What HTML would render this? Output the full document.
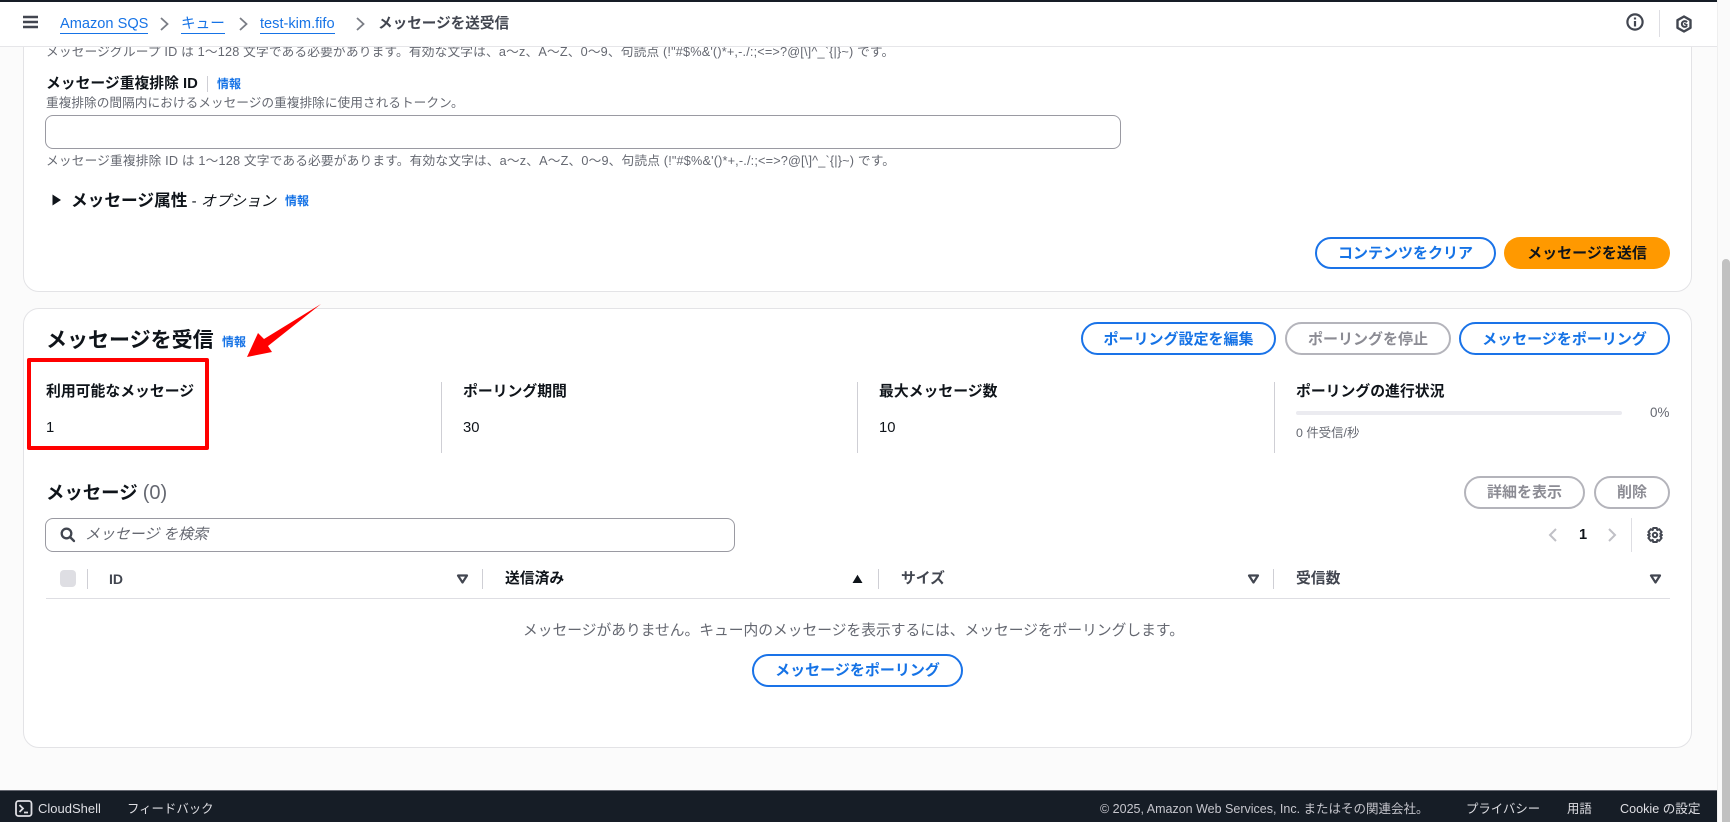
<!DOCTYPE html>
<html lang="ja"><head><meta charset="utf-8"><title>メッセージを送受信</title>
<style>
html,body{margin:0;padding:0;width:1730px;height:822px;overflow:hidden;background:#fbfbfb}
body{position:relative;font-family:"Liberation Sans","Noto Sans CJK JP",sans-serif;color:#0f141a;filter:blur(.35px)}
.a,.t,.b{position:absolute;box-sizing:border-box}
.t{white-space:nowrap;height:20px;line-height:20px;font-size:14.4px}
.h{font-weight:700}
.g{color:#656871}
.d{color:#424650}
.i{color:#1673e6;font-size:12px;font-weight:700}
.b{border:2px solid #1a73e8;border-radius:17px;color:#1673e6;font-weight:700;font-size:15px;text-align:center;white-space:nowrap;background:#fff}
.b.x{border-color:#b4b4bb;color:#8c8c94}
.b.o{border:0;background:#ff9900;color:#0f141a}
.card{background:#fff;border:1px solid #e3e3e6;border-radius:16px}
.v{background:#cfcfd5;width:1px}
.hp{font-size:12.7px;letter-spacing:.17px}
svg{position:absolute;overflow:visible}
</style></head><body>

<!-- card 1 -->
<div class="a card" style="left:23px;top:-20px;width:1669px;height:312px"></div>
<div class="t g hp" style="left:46px;top:42px">メッセージグループ ID は 1～128 文字である必要があります。有効な文字は、a～z、A～Z、0～9、句読点 (!"#$%&amp;'()*+,-./:;&lt;=&gt;?@[\]^_`{|}~) です。</div>
<div class="t h" style="left:46px;top:74px;font-size:14.8px">メッセージ重複排除 ID</div>
<div class="a" style="left:207px;top:76px;width:1px;height:16px;background:#cfcfd5"></div>
<div class="t i" style="left:217px;top:74px">情報</div>
<div class="t g" style="left:46px;top:93px;font-size:12.7px">重複排除の間隔内におけるメッセージの重複排除に使用されるトークン。</div>
<div class="a" style="left:45px;top:115px;width:1076px;height:34px;border:1px solid #9a9aa2;border-radius:8px;background:#fff"></div>
<div class="t g hp" style="left:46px;top:151px">メッセージ重複排除 ID は 1～128 文字である必要があります。有効な文字は、a～z、A～Z、0～9、句読点 (!"#$%&amp;'()*+,-./:;&lt;=&gt;?@[\]^_`{|}~) です。</div>
<svg style="left:52px;top:194px" width="10" height="12"><path d="M0.5 0.5L9 6L0.5 11.5Z" fill="#0f141a"/></svg>
<div class="t" style="left:71px;top:191px;font-size:16.7px;font-weight:700">メッセージ属性<span style="font-weight:400;font-size:15px"> - <i>オプション</i></span></div>
<div class="t i" style="left:285px;top:191px">情報</div>
<div class="b" style="left:1315px;top:237px;width:181px;height:32px;line-height:29px">コンテンツをクリア</div>
<div class="b o" style="left:1504px;top:237px;width:166px;height:32px;line-height:33px">メッセージを送信</div>

<!-- card 2 -->
<div class="a card" style="left:23px;top:308px;width:1669px;height:440px"></div>
<div class="t h" style="left:46px;top:331px;font-size:21px">メッセージを受信</div>
<div class="t i" style="left:222px;top:332px">情報</div>
<div class="b" style="left:1081px;top:322px;width:195px;height:33px;line-height:31px">ポーリング設定を編集</div>
<div class="b x" style="left:1285px;top:322px;width:166px;height:33px;line-height:31px">ポーリングを停止</div>
<div class="b" style="left:1459px;top:322px;width:211px;height:33px;line-height:31px">メッセージをポーリング</div>

<div class="a" style="left:27px;top:358px;width:182px;height:92px;border:4px solid #ff0000;border-radius:2px"></div>
<svg style="left:0;top:0" width="400" height="400"><path d="M247 357L258 333L264 339L321 304L268 346L272 352Z" fill="#ff0000"/></svg>

<div class="t h" style="left:46px;top:382px;font-size:14.85px">利用可能なメッセージ</div>
<div class="t" style="left:46px;top:418px;font-size:14.8px">1</div>
<div class="a v" style="left:441px;top:382px;height:71px"></div>
<div class="t h" style="left:463px;top:382px;font-size:14.85px">ポーリング期間</div>
<div class="t" style="left:463px;top:418px;font-size:14.8px">30</div>
<div class="a v" style="left:857px;top:382px;height:71px"></div>
<div class="t h" style="left:879px;top:382px;font-size:14.85px">最大メッセージ数</div>
<div class="t" style="left:879px;top:418px;font-size:14.8px">10</div>
<div class="a v" style="left:1274px;top:382px;height:71px"></div>
<div class="t h" style="left:1296px;top:382px;font-size:14.85px">ポーリングの進行状況</div>
<div class="a" style="left:1296px;top:411px;width:326px;height:4px;background:#ebebf0;border-radius:2px"></div>
<div class="t g" style="left:1650px;top:403px;font-size:13.4px">0%</div>
<div class="t g" style="left:1296px;top:423px;font-size:12.4px">0 件受信/秒</div>

<div class="t h" style="left:46px;top:483px;font-size:18.4px">メッセージ <span class="g" style="font-weight:400;font-size:20px">(0)</span></div>
<div class="b x" style="left:1464px;top:476px;width:121px;height:33px;line-height:30px">詳細を表示</div>
<div class="b x" style="left:1594px;top:476px;width:76px;height:33px;line-height:30px">削除</div>

<div class="a" style="left:45px;top:518px;width:690px;height:34px;border:1px solid #9a9aa2;border-radius:8px;background:#fff"></div>
<svg style="left:60px;top:527px" width="15" height="15" fill="none" stroke="#424650" stroke-width="2.3"><circle cx="6.5" cy="6.5" r="4.8"/><path d="M10 10L14 14" stroke-linecap="round"/></svg>
<div class="t" style="left:85px;top:525px;font-size:14.9px;font-style:italic;color:#656871">メッセージ を検索</div>

<svg style="left:1548px;top:528px" width="10" height="14" fill="none" stroke="#c0c0c6" stroke-width="2"><path d="M8 1L2 7L8 13"/></svg>
<div class="t h" style="left:1579px;top:525px;font-size:14.6px">1</div>
<svg style="left:1607px;top:528px" width="10" height="14" fill="none" stroke="#c0c0c6" stroke-width="2"><path d="M2 1L8 7L2 13"/></svg>
<div class="a" style="left:1631px;top:518px;width:1px;height:34px;background:#dedee3"></div>
<svg style="left:1647px;top:527px" width="16" height="16" viewBox="0 0 16 16" fill="none" stroke="#424650" stroke-width="2" stroke-linejoin="round"><path d="M6.2 1H9.8L10.3 3.1L12.3 2.2L14.6 5L13.2 6.7L15 8L13.2 9.3L14.6 11L12.3 13.8L10.3 12.9L9.8 15H6.2L5.7 12.9L3.7 13.8L1.4 11L2.8 9.3L1 8L2.8 6.7L1.4 5L3.7 2.2L5.7 3.1Z"/><circle cx="8" cy="8" r="2.2"/></svg>

<!-- table header -->
<div class="a" style="left:60px;top:570px;width:16px;height:17px;background:#dedee3;border-radius:4px"></div>
<div class="a v" style="left:87px;top:569px;height:20px"></div>
<div class="t h d" style="left:109px;top:569px;font-size:14px">ID</div>
<svg style="left:457px;top:574px" width="11" height="10" fill="none" stroke="#424650" stroke-width="2.2" stroke-linejoin="round"><path d="M1 1.5H10L5.5 8.5Z"/></svg>
<div class="a v" style="left:482px;top:569px;height:20px"></div>
<div class="t h" style="left:505px;top:569px;font-size:14.8px">送信済み</div>
<svg style="left:852px;top:574px" width="11" height="10"><path d="M0.5 9H10.5L5.5 0.8Z" fill="#0f141a"/></svg>
<div class="a v" style="left:878px;top:569px;height:20px"></div>
<div class="t h d" style="left:901px;top:569px;font-size:14.8px">サイズ</div>
<svg style="left:1248px;top:574px" width="11" height="10" fill="none" stroke="#424650" stroke-width="2.2" stroke-linejoin="round"><path d="M1 1.5H10L5.5 8.5Z"/></svg>
<div class="a v" style="left:1273px;top:569px;height:20px"></div>
<div class="t h d" style="left:1296px;top:569px;font-size:14.8px">受信数</div>
<svg style="left:1650px;top:574px" width="11" height="10" fill="none" stroke="#424650" stroke-width="2.2" stroke-linejoin="round"><path d="M1 1.5H10L5.5 8.5Z"/></svg>
<div class="a" style="left:46px;top:598px;width:1624px;height:1px;background:#dedee3"></div>

<div class="t g" style="left:523px;top:621px;font-size:14.75px">メッセージがありません。キュー内のメッセージを表示するには、メッセージをポーリングします。</div>
<div class="b" style="left:752px;top:654px;width:211px;height:33px;line-height:30px">メッセージをポーリング</div>

<!-- header -->
<div class="a" style="left:0;top:0;width:1717px;height:47px;background:#fff;border-bottom:1px solid #e6e6e9"></div>
<div class="a" style="left:0;top:0;width:1717px;height:2px;background:#161d26"></div>
<svg style="left:23px;top:15px" width="15" height="14" fill="none" stroke="#424650" stroke-width="2.4"><path d="M0 2H15M0 7H15M0 12H15"/></svg>
<div class="t" style="left:60px;top:14px;font-size:14.6px;color:#1673e6;border-bottom:1px solid #1673e6">Amazon SQS</div>
<svg style="left:160px;top:17px" width="9" height="14" fill="none" stroke="#7a7d85" stroke-width="1.8"><path d="M1 1L7.5 7L1 13"/></svg>
<div class="t" style="left:181px;top:14px;font-size:14.6px;color:#1673e6;border-bottom:1px solid #1673e6">キュー</div>
<svg style="left:239px;top:17px" width="9" height="14" fill="none" stroke="#7a7d85" stroke-width="1.8"><path d="M1 1L7.5 7L1 13"/></svg>
<div class="t" style="left:260px;top:14px;font-size:14.6px;color:#1673e6;border-bottom:1px solid #1673e6">test-kim.fifo</div>
<svg style="left:356px;top:17px" width="9" height="14" fill="none" stroke="#7a7d85" stroke-width="1.8"><path d="M1 1L7.5 7L1 13"/></svg>
<div class="t h d" style="left:378px;top:14px;font-size:14.6px">メッセージを送受信</div>
<svg style="left:1626px;top:13px" width="18" height="18" fill="none" stroke="#424650" stroke-width="2.2"><circle cx="9" cy="9" r="7.6"/><path d="M9 8V13.5M9 4.5V6.5"/></svg>
<div class="a" style="left:1659px;top:10px;width:1px;height:27px;background:#dedee3"></div>
<svg style="left:1676px;top:15px" width="16" height="18" fill="none" stroke="#424650" stroke-linejoin="round"><path d="M8 1.5L14.5 5.2V12.8L8 16.5L1.5 12.8V5.2Z" stroke-width="2.4"/><path d="M11 7.2A2.9 2.9 0 1 0 11 10.8" stroke-width="2"/><path d="M8 8.4L11.5 10.2" stroke-width="1.6"/></svg>

<!-- footer -->
<div class="a" style="left:0;top:790px;width:1717px;height:32px;background:#161d26;border-top:1px solid #656871"></div>
<svg style="left:15px;top:800px" width="18" height="18" fill="none" stroke="#dedee3" stroke-width="1.8"><rect x="1" y="1" width="15.5" height="15" rx="2.5"/><path d="M4.5 5L8 8.5L4.5 12M9 12.5H13"/></svg>
<div class="t" style="left:38px;top:799px;font-size:13px;color:#dedee3">CloudShell</div>
<div class="t" style="left:127px;top:799px;font-size:12.4px;color:#dedee3">フィードバック</div>
<div class="t" style="left:1100px;top:799px;font-size:12.5px;color:#c6c6cd">© 2025, Amazon Web Services, Inc. またはその関連会社。</div>
<div class="t" style="left:1466px;top:799px;font-size:12.4px;color:#dedee3">プライバシー</div>
<div class="t" style="left:1567px;top:799px;font-size:12.4px;color:#dedee3">用語</div>
<div class="t" style="left:1620px;top:799px;font-size:12.6px;color:#dedee3">Cookie の設定</div>

<!-- scrollbar -->
<div class="a" style="left:1717px;top:0;width:13px;height:822px;background:#fafafa;border-left:1px solid #efefef"></div>
<div class="a" style="left:1722px;top:259px;width:8px;height:563px;background:#c1c1c1;border-radius:4px 4px 0 0"></div>
</body></html>
